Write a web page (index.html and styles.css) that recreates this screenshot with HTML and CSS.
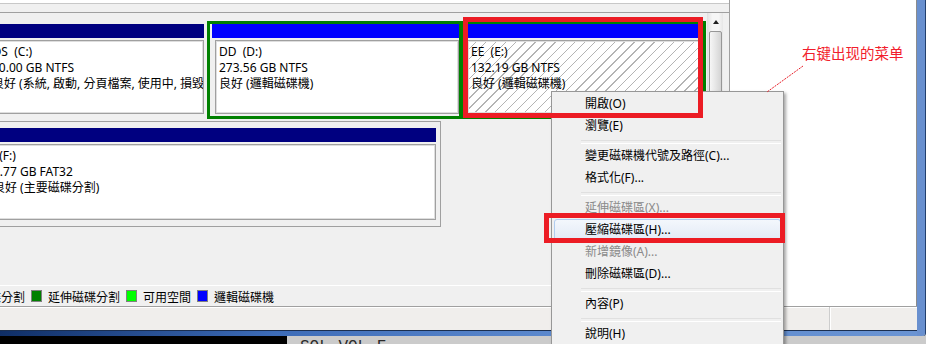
FILE: index.html
```html
<!DOCTYPE html>
<html lang="zh-Hant">
<head>
    <meta charset="UTF-8">
    <title>磁碟管理</title>
    <link rel="stylesheet" href="styles.css">
</head>
<body>
    <div class="window">
        <div class="main">
            <div class="left">
                <div class="prev"></div>
                <div class="vol-area">
                    <div class="disks">
                        <div class="disk-row first">
                            <div class="part c">
                                <div class="bar navy"></div>
                                <div class="body">
                                    <div class="ln">OS  (C:)</div>
                                    <div class="ln">30.00 GB NTFS</div>
                                    <div class="ln">良好 (系統, 啟動, 分頁檔案, 使用中, 損毀傾印, 主要磁碟分割)</div>
                                </div>
                            </div>
                            <div class="part d">
                                <div class="bar blue"></div>
                                <div class="body">
                                    <div class="ln">DD  (D:)</div>
                                    <div class="ln">273.56 GB NTFS</div>
                                    <div class="ln">良好 (邏輯磁碟機)</div>
                                </div>
                            </div>
                            <div class="part e">
                                <div class="bar blue"></div>
                                <div class="body">
                                    <div class="ln">EE  (E:)</div>
                                    <div class="ln">132.19 GB NTFS</div>
                                    <div class="ln">良好 (邏輯磁碟機)</div>
                                </div>
                            </div>
                        </div>
                        <div class="disk-row second">
                            <div class="part f">
                                <div class="bar navy"></div>
                                <div class="body">
                                    <div class="ln">  (F:)</div>
                                    <div class="ln">3.77 GB FAT32</div>
                                    <div class="ln">良好 (主要磁碟分割)</div>
                                </div>
                            </div>
                        </div>
                    </div>
                    <div class="scroll">
                        <div class="arrow"></div>
                        <div class="thumb"></div>
                    </div>
                </div>
                <div class="legend">
                    <span>主要磁碟分割</span>
                    <span class="sw ext"></span>
                    <span>延伸磁碟分割</span>
                    <span class="sw free"></span>
                    <span>可用空間</span>
                    <span class="sw logical"></span>
                    <span>邏輯磁碟機</span>
                </div>
            </div>
            <div class="right"></div>
        </div>
        <div class="status">
            <div class="cell"></div>
        </div>
        <div class="frame-bottom"></div>
    </div>
    <div class="taskbar">
        <div class="term"></div>
        <div class="sql">SQL VOL F</div>
    </div>

    <!-- context menu -->
    <div class="menu">
        <div class="mi">開啟(O)</div>
        <div class="mi">瀏覽(E)</div>
        <div class="sep"></div>
        <div class="mi">變更磁碟機代號及路徑(C)...</div>
        <div class="mi">格式化(F)...</div>
        <div class="sep"></div>
        <div class="mi off">延伸磁碟區(X)...</div>
        <div class="mi hot">壓縮磁碟區(H)...</div>
        <div class="mi off">新增鏡像(A)...</div>
        <div class="mi">刪除磁碟區(D)...</div>
        <div class="sep"></div>
        <div class="mi">內容(P)</div>
        <div class="sep"></div>
        <div class="mi">說明(H)</div>
    </div>

    <!-- annotations -->
    <div class="mark mark-e"></div>
    <div class="mark mark-h"></div>
    <div class="note">右键出现的菜单</div>
    <svg class="pointer" width="50" height="40" viewBox="0 0 50 40">
        <line x1="43" y1="6" x2="7" y2="32" stroke="#e8202a" stroke-width="1" stroke-dasharray="2 1"/>
    </svg>
</body>
</html>
```

FILE: styles.css
```css
* {
    box-sizing: border-box;
}

body {
    margin: 0;
    width: 926px;
    height: 344px;
    overflow: hidden;
    position: relative;
    background-color: #d0d0d0;
    font-family: "Noto Sans", "Noto Sans CJK TC", sans-serif;
    font-size: 12px;
    color: #000;
}

.window {
    width: 925px;
    height: 336px;
    display: flex;
    flex-direction: column;
    border-right: 8px solid #6990cf;
    border-bottom-right-radius: 3px;
    box-shadow: 1px 0 0 #23406e;
}

.main {
    height: 306px;
    display: flex;
}

.left {
    width: 730px;
    display: flex;
    flex-direction: column;
    overflow: hidden;
    background-color: #f0f0f0;
    border-right: 1px solid #a0a0a0;
}

.prev {
    height: 4px;
    background-color: white;
    border-bottom: 1px solid #c8c8c8;
}

.vol-area {
    margin-top: 8px;
    height: 273px;
    display: flex;
    border-top: 1px solid #a0a0a0;
}

.disks {
    flex: none;
    width: 727px;
    margin-left: -20px;
}

.disk-row {
    display: flex;
}

.disk-row.first {
    height: 108px;
    padding: 8px 0 2px;
}

.disk-row.second {
    width: 461px;
    height: 106px;
    padding: 3px 1px 0 0;
    border: 1px solid #a0a0a0;
}

.part {
    border: 3px solid #f0f0f0;
    padding: 0 0 2px 2px;
}

.part.c {
    width: 227px;
}

.part.d {
    width: 255px;
    border-color: #008000;
}

.part.e {
    width: 244px;
    border-color: #008000;
}

.part.f {
    width: 458px;
}

.bar {
    height: 14px;
}

.navy {
    background-color: #000080;
}

.blue {
    background-color: #0000ff;
}

.body {
    height: 74px;
    margin: 2px 0 0 3px;
    padding: 3px 0 0 3px;
    background-color: white;
    border: 1px solid #a0a0a0;
    box-shadow: inset 0 0 0 1px #dedede;
    line-height: 16px;
    overflow: hidden;
}

.ln {
    white-space: pre;
}

.e .body {
    margin-left: 0;
    background: repeating-linear-gradient(135deg, #fff 0 6px, #b4b4b4 6px 7px);
}

.f .body {
    height: 76px;
}

.scroll {
    width: 16px;
    display: flex;
    flex-direction: column;
    border-left: 1px solid #e2e2e2;
    background: linear-gradient(to right, #e6e6e6, #f6f6f6 30%, #f6f6f6 70%, #e6e6e6);
}

.arrow {
    height: 18px;
    display: flex;
    align-items: center;
    justify-content: center;
}

.arrow::before {
    content: "";
    border-left: 3px solid transparent;
    border-right: 3px solid transparent;
    border-bottom: 4px solid #202020;
}

.thumb {
    height: 160px;
    margin: 0 1px;
    border: 1px solid #979797;
    border-radius: 2px;
    background: linear-gradient(to right, #f6f6f6, #e6e6e6 50%, #d4d4d4);
}

.legend {
    height: 21px;
    margin-left: -47px;
    display: flex;
    align-items: center;
    border-top: 1px solid white;
    font-family: "Noto Sans CJK TC", sans-serif;
    white-space: nowrap;
}

.sw {
    flex: none;
    width: 11px;
    height: 12px;
    margin: 0 6px;
    border: 1px solid #808080;
}

.sw.ext {
    background-color: #008000;
}

.sw.free {
    background-color: #00ff00;
}

.sw.logical {
    background-color: #0000ff;
}

.right {
    width: 187px;
    background-color: white;
    border-right: 1px solid #8c8c8c;
}

.status {
    height: 24px;
    display: flex;
    background-color: #f0eeec;
    border-top: 1px solid #a0a0a0;
    box-shadow: inset 0 1px 0 white;
}

.status .cell {
    width: 830px;
    border-right: 1px solid #cdcdcd;
    box-shadow: 1px 0 0 white;
}

.frame-bottom {
    height: 6px;
    border-top: 1px solid #1b2f50;
    background: linear-gradient(to right, #0f2e66, #3d6cb8 30%, #5b88cd 60%, #6a94d3);
}

.taskbar {
    height: 8px;
    display: flex;
}

.term {
    width: 287px;
    background-color: #000;
}

.sql {
    flex: 1;
    padding: 3px 0 0 13px;
    background-color: #cbcbcb;
    color: #2a2a2a;
    font-family: "Liberation Mono", monospace;
    font-size: 16px;
    line-height: 16px;
    white-space: pre;
    overflow: hidden;
}

.menu {
    position: absolute;
    left: 551px;
    top: 91px;
    width: 233px;
    height: 260px;
    padding: 1px 2px;
    background-color: #f0f0f0;
    border: 1px solid #979797;
    box-shadow: 2px 2px 3px rgba(0, 0, 0, 0.35);
}

.mi {
    height: 22px;
    line-height: 22px;
    padding-left: 31px;
    white-space: nowrap;
}

.mi.off {
    color: #8a8a8a;
}

.mi.hot {
    line-height: 20px;
    padding-left: 30px;
    border: 1px solid #b0cdf0;
    border-radius: 3px;
    background: linear-gradient(#f3f7fc, #e2eaf6);
}

.sep {
    height: 8px;
    margin-left: 27px;
    padding-top: 3px;
}

.sep::before {
    content: "";
    display: block;
    height: 2px;
    border-top: 1px solid #e0e0e0;
    border-bottom: 1px solid white;
}

.mark {
    position: absolute;
    border: 5px solid #ec1c24;
}

.mark-e {
    left: 463px;
    top: 17px;
    width: 240px;
    height: 101px;
}

.mark-h {
    left: 544px;
    top: 213px;
    width: 241px;
    height: 30px;
}

.note {
    position: absolute;
    left: 802px;
    top: 44px;
    color: #f21d2d;
    font-family: "Noto Sans CJK SC", sans-serif;
    font-size: 14.5px;
    line-height: 18px;
}

.pointer {
    position: absolute;
    left: 760px;
    top: 60px;
}
```
